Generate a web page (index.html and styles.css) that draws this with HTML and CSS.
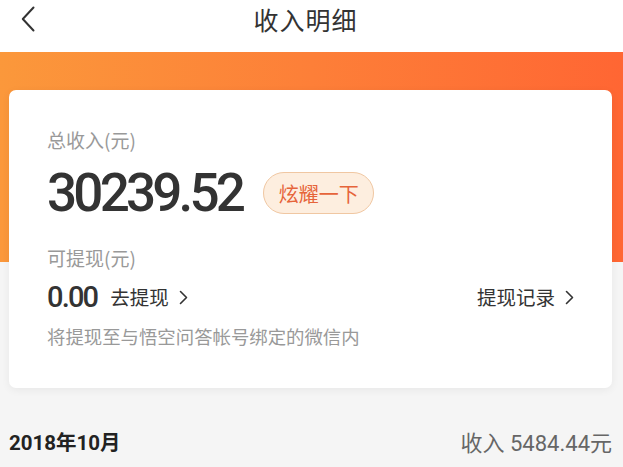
FILE: index.html
```html
<!DOCTYPE html>
<html lang="zh-CN">
<head>
<meta charset="utf-8">
<title>收入明细</title>
<link rel="stylesheet" href="styles.css">
</head>
<body>
<div class="page">
  <header class="nav">
    <span class="back">
      <svg width="14" height="26" viewBox="0 0 14 26"><polyline points="12.5,1.5 1.8,13 12.5,24.5" fill="none" stroke="#333" stroke-width="2" stroke-linecap="round" stroke-linejoin="round"/></svg>
    </span>
    <h1 class="title">收入明细</h1>
  </header>
  <main class="main">
    <section class="card">
      <div class="label label-total">总收入(元)</div>
      <div class="amount-row">
        <span class="amount">30239.52</span>
        <span class="pill">炫耀一下</span>
      </div>
      <div class="label label-avail">可提现(元)</div>
      <div class="withdraw-row">
        <div class="withdraw-left">
          <span class="avail">0.00</span>
          <span class="link">去提现<svg class="chev" width="9" height="15" viewBox="0 0 9 15"><polyline points="1.5,1.5 7.5,7.5 1.5,13.5" fill="none" stroke="#333" stroke-width="1.6" stroke-linecap="round" stroke-linejoin="round"/></svg></span>
        </div>
        <span class="link">提现记录<svg class="chev" width="9" height="15" viewBox="0 0 9 15"><polyline points="1.5,1.5 7.5,7.5 1.5,13.5" fill="none" stroke="#333" stroke-width="1.6" stroke-linecap="round" stroke-linejoin="round"/></svg></span>
      </div>
      <div class="hint">将提现至与悟空问答帐号绑定的微信内</div>
    </section>
    <div class="month-row">
      <span class="month">2018年10月</span>
      <span class="month-income">收入 5484.44元</span>
    </div>
  </main>
</div>
</body>
</html>
```
FILE: styles.css
```css
* { box-sizing: border-box; margin: 0; padding: 0; }
html, body { width: 623px; height: 467px; overflow: hidden; }
body {
  font-family: Roboto, "Noto Sans CJK SC", sans-serif;
  background: #f5f5f5;
  color: #333;
}
.page { width: 623px; height: 467px; display: flex; flex-direction: column; }
.nav {
  height: 52px;
  background: #fff;
  display: flex;
  align-items: center;
  justify-content: center;
  position: relative;
  padding-bottom: 14px;
  padding-right: 12px;
}
.back {
  position: absolute;
  left: 21px;
  top: 6px;
  display: flex;
}
.title {
  font-family: "Noto Sans CJK SC", sans-serif;
  font-weight: 400;
  font-size: 25px;
  line-height: 30px;
  color: #333;
  letter-spacing: 1px;
}
.main {
  flex: 1;
  background: linear-gradient(90deg, #fb983b 0%, #fd7f38 50%, #ff6633 100%) top left / 100% 210px no-repeat, #f5f5f5;
  padding: 38px 11px 0 9px;
}
.card {
  background: #fff;
  border-radius: 7px;
  box-shadow: 0 2px 8px rgba(0, 0, 0, 0.06);
  padding: 38px 38px 40px 38px;
  display: flex;
  flex-direction: column;
}
.label {
  font-family: "Noto Sans CJK SC", sans-serif;
  font-size: 19px;
  line-height: 24px;
  color: #999;
}
.amount-row {
  margin-top: 16px;
  height: 50px;
  display: flex;
  align-items: center;
  gap: 21px;
}
.amount {
  font-family: Roboto, sans-serif;
  font-weight: 500;
  font-size: 53px;
  line-height: 50px;
  letter-spacing: -3.8px;
  color: #333;
}
.pill {
  height: 42px;
  width: 111px;
  border-radius: 21px;
  border: 1px solid #f0c7a2;
  background: #fdeedf;
  color: #e6643a;
  font-family: "Noto Sans CJK SC", sans-serif;
  font-size: 20px;
  display: flex;
  align-items: center;
  justify-content: center;
}
.label-avail { margin-top: 28px; }
.withdraw-row {
  margin-top: 12px;
  height: 30px;
  display: flex;
  align-items: center;
  justify-content: space-between;
}
.withdraw-left { display: flex; align-items: center; gap: 13px; }
.avail {
  font-family: Roboto, sans-serif;
  font-weight: 500;
  font-size: 29px;
  line-height: 30px;
  letter-spacing: -1.8px;
  color: #333;
}
.link {
  font-family: "Noto Sans CJK SC", sans-serif;
  font-size: 19.5px;
  line-height: 30px;
  color: #333;
  display: flex;
  align-items: center;
}
.chev { margin-left: 10px; }
.hint {
  margin-top: 12px;
  font-family: "Noto Sans CJK SC", sans-serif;
  font-size: 18.4px;
  line-height: 24px;
  color: #999;
}
.month-row {
  margin-top: 39px;
  height: 28px;
  display: flex;
  align-items: center;
  justify-content: space-between;
}
.month {
  font-family: Roboto, "Noto Sans CJK SC", sans-serif;
  font-weight: 700;
  font-size: 20.5px;
  color: #222;
}
.month-income {
  font-family: Roboto, "Noto Sans CJK SC", sans-serif;
  font-size: 22px;
  color: #666;
}
```
